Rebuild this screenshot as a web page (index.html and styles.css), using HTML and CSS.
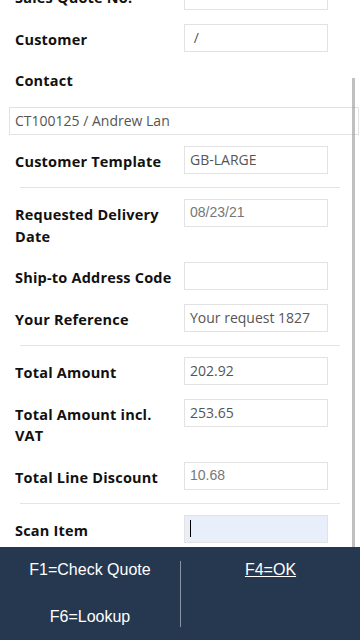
FILE: index.html
```html
<!DOCTYPE html>
<html lang="en">

<head>
    <meta charset="UTF-8">
    <meta name="viewport" content="width=device-width, initial-scale=1.0">
    <title>Sales Quote</title>
    <link rel="stylesheet" href="styles.css">
</head>

<body>
    <main class="page">
        <div class="form">
            <div class="row">
                <label>Sales Quote No.</label>
                <div class="field"></div>
            </div>
            <div class="row">
                <label>Customer</label>
                <div class="field">&nbsp;/</div>
            </div>
            <div class="row stack">
                <label>Contact</label>
                <div class="field wide">CT100125 / Andrew Lan</div>
            </div>
            <div class="row">
                <label>Customer Template</label>
                <div class="field">GB-LARGE</div>
            </div>
            <div class="sep"></div>
            <div class="row">
                <label>Requested Delivery Date</label>
                <div class="field plain">08/23/21</div>
            </div>
            <div class="row">
                <label>Ship-to Address Code</label>
                <div class="field"></div>
            </div>
            <div class="row">
                <label>Your Reference</label>
                <div class="field">Your request 1827</div>
            </div>
            <div class="sep"></div>
            <div class="row">
                <label>Total Amount</label>
                <div class="field">202.92</div>
            </div>
            <div class="row">
                <label>Total Amount incl. VAT</label>
                <div class="field">253.65</div>
            </div>
            <div class="row">
                <label>Total Line Discount</label>
                <div class="field plain">10.68</div>
            </div>
            <div class="sep"></div>
            <div class="row">
                <label>Scan Item</label>
                <div class="field focus"><span class="caret"></span></div>
            </div>
        </div>
        <div class="scrollbar"></div>
    </main>
    <footer class="keys">
        <div class="col">
            <span>F1=Check Quote</span>
            <span>F6=Lookup</span>
        </div>
        <div class="col">
            <span class="link">F4=OK</span>
        </div>
    </footer>
</body>

</html>
```

FILE: styles.css
```css
html,
body {
    width: 100%;
    height: 100%;
    background-color: #ffffff;
}

* {
    margin: 0;
    padding: 0;
    box-sizing: border-box;
}

body {
    display: flex;
    flex-direction: column;
    overflow: hidden;
}

.page {
    position: relative;
    height: 547px;
    overflow: hidden;
}

.form {
    margin-top: -18px;
    padding: 0 32px 0 15px;
}

.row {
    display: flex;
    align-items: flex-start;
    padding-bottom: 12px;
}

.row label {
    width: 169px;
    flex: none;
    padding: 5px 10px 3px 0;
    font-family: "Open Sans", sans-serif;
    font-weight: 700;
    font-size: 14.5px;
    letter-spacing: 0.2px;
    line-height: 21.5px;
    color: #111;
}

.row.stack {
    flex-direction: column;
    padding-bottom: 11px;
}

.field {
    width: 144px;
    height: 28px;
    border: 1px solid #e2e2e2;
    padding: 0 5px;
    font-family: "Open Sans", sans-serif;
    font-size: 14px;
    line-height: 25px;
    color: #555;
    white-space: nowrap;
    overflow: hidden;
}

.field.wide {
    width: 350px;
    margin: 12px 0 0 -6px;
}

.field.plain {
    font-family: "Liberation Sans", Arial, sans-serif;
    color: #777;
}

.field.focus {
    background-color: #e8eefa;
    padding-top: 4px;
}

.caret {
    display: block;
    width: 1px;
    height: 17px;
    background-color: #000;
}

.sep {
    height: 1px;
    margin: 0 -12px 11px 5px;
    background-color: #e4e4e4;
}

.scrollbar {
    position: absolute;
    right: 5px;
    top: 78px;
    width: 3px;
    height: 542px;
    background-color: rgba(142, 142, 142, 0.56);
    z-index: 2;
}

.keys {
    flex: 1;
    display: grid;
    grid-template-columns: 1fr 1fr;
    background-color: #263850;
    padding: 14px 0 13px;
    font-family: "Liberation Sans", Arial, sans-serif;
    font-size: 16px;
    color: #fff;
}

.keys .col {
    display: flex;
    flex-direction: column;
    align-items: center;
    gap: 29px;
    line-height: 18px;
}

.keys .col + .col {
    border-left: 1px solid #8a94a3;
}

.link {
    text-decoration: underline;
}
```
